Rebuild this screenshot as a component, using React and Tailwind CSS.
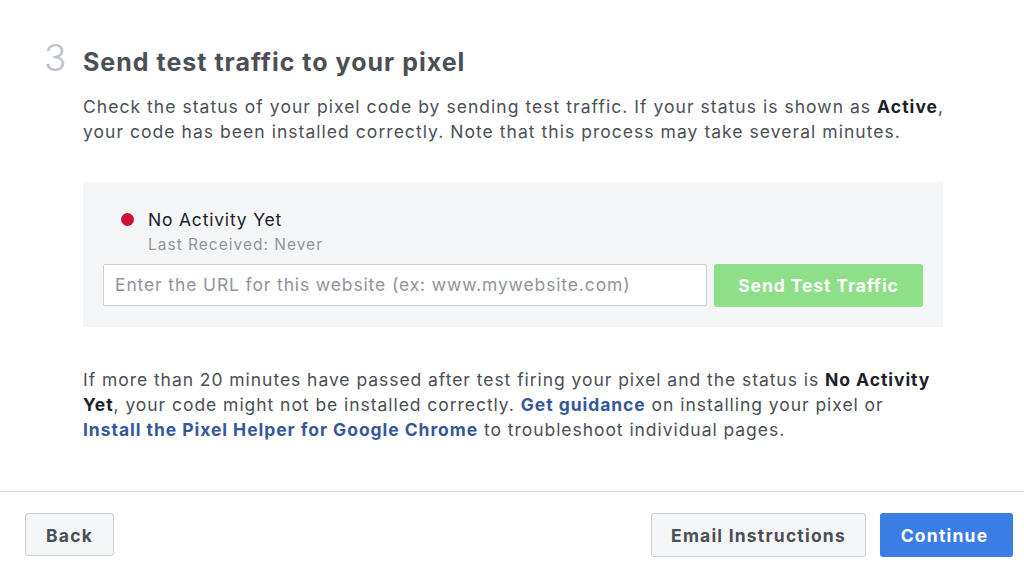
import React from 'react';

const font = { fontFamily: 'Inter, "Noto Sans", sans-serif' };

function App() {
  return (
    <div className="w-[1024px] h-[572px] bg-white text-[#4b4f56] overflow-hidden" style={font}>
      <div className="h-[491px] pl-[44px] pt-[36px]">
        <div className="flex items-baseline">
          <span className="w-[39px] text-[37px] font-light leading-[44px] text-[#bec3c9]">3</span>
          <h1 className="text-[25px] font-bold tracking-[1px] text-[#4b4f56]">Send test traffic to your pixel</h1>
        </div>

        <div className="ml-[39px] w-[880px]">
          <p className="mt-[12px] text-[17.5px] tracking-[1.04px] leading-[25px] text-[#4b4f56] whitespace-nowrap">
            Check the status of your pixel code by sending test traffic. If your status is shown as <b className="text-[#1d2129]">Active</b>,<br />
            your code has been installed correctly. Note that this process may take several minutes.
          </p>

          <div className="mt-[38px] w-[860px] h-[145px] bg-[#f5f6f7] px-[20px] pt-[27px]">
            <div className="flex items-center pl-[18px]">
              <span className="w-[13px] h-[13px] rounded-full bg-[#d0103a]"></span>
              <span className="ml-[14px] text-[17.5px] tracking-[0.8px] leading-[22px] text-[#1d2129]">No Activity Yet</span>
            </div>
            <div className="pl-[45px] mt-[4px] text-[15.5px] tracking-[1px] leading-[20px] text-[#90949c]">Last Received: Never</div>
            <div className="flex mt-[9px] gap-[7px]">
              <input
                className="w-[604px] h-[42px] bg-white border border-[#ccd0d5] rounded-[2px] px-[11px] text-[17.5px] tracking-[0.87px] text-[#1d2129] placeholder:text-[#90949c] outline-none"
                placeholder="Enter the URL for this website (ex: www.mywebsite.com)"
              />
              <button className="w-[209px] h-[43px] pt-[2px] rounded-[3px] bg-[#8ddf88] text-white font-bold text-[17.5px] tracking-[0.9px]">Send Test Traffic</button>
            </div>
          </div>

          <p className="mt-[40px] text-[17.5px] tracking-[0.95px] leading-[25px] text-[#4b4f56] whitespace-nowrap">
            If more than 20 minutes have passed after test firing your pixel and the status is <b className="text-[#1d2129]">No Activity</b><br />
            <b className="text-[#1d2129]">Yet</b>, your code might not be installed correctly. <a className="font-bold text-[#365899]">Get guidance</a> on installing your pixel or<br />
            <a className="font-bold text-[#365899]">Install the Pixel Helper for Google Chrome</a> to troubleshoot individual pages.
          </p>
        </div>
      </div>

      <div className="border-t border-[#dddfe2] flex items-start justify-between px-[11px] pt-[21px]">
        <button className="ml-[14px] w-[89px] h-[43px] pt-[3px] rounded-[3px] border border-[#ccd0d5] bg-[#f5f6f7] font-bold text-[17.5px] tracking-[1.2px] text-[#4b4f56]">Back</button>
        <div className="flex gap-[14px]">
          <button className="w-[215px] h-[44px] pt-[3px] rounded-[3px] border border-[#ccd0d5] bg-[#f5f6f7] font-bold text-[17.5px] tracking-[1.2px] text-[#4b4f56]">Email Instructions</button>
          <button className="w-[133px] h-[44px] pt-[3px] pr-[4px] rounded-[3px] bg-[#3a7de4] font-bold text-[17.5px] tracking-[1.2px] text-white">Continue</button>
        </div>
      </div>
    </div>
  );
}

export default App;
